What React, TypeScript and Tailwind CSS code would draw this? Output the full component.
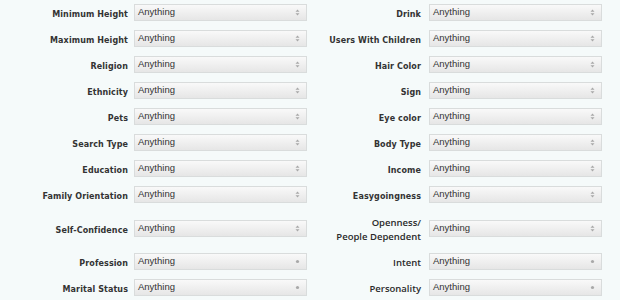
import React from "react";

type Field = {
  label: string;
  alt?: boolean; // label drawn in Open Sans instead of the Verdana-like face
  dot?: boolean; // single dot arrow instead of up/down carets
};

const rows: [Field, Field][] = [
  [{ label: "Minimum Height" }, { label: "Drink" }],
  [{ label: "Maximum Height" }, { label: "Users With Children" }],
  [{ label: "Religion" }, { label: "Hair Color" }],
  [{ label: "Ethnicity" }, { label: "Sign" }],
  [{ label: "Pets" }, { label: "Eye color" }],
  [{ label: "Search Type" }, { label: "Body Type" }],
  [{ label: "Education" }, { label: "Income" }],
  [{ label: "Family Orientation" }, { label: "Easygoingness" }],
  [{ label: "Self-Confidence" }, { label: "Openness/\nPeople Dependent", alt: true }],
  [{ label: "Profession", dot: true }, { label: "Intent", alt: true, dot: true }],
  [{ label: "Marital Status", dot: true }, { label: "Personality", alt: true, dot: true }],
];

const Arrow = ({ dot }: { dot?: boolean }) =>
  dot ? (
    <svg width="5" height="5" viewBox="0 0 5 5" className="shrink-0">
      <circle cx="2.5" cy="2.5" r="1.6" fill="#a8a8a8" />
    </svg>
  ) : (
    <svg width="5" height="7" viewBox="0 0 5 7" className="shrink-0">
      <path d="M2.5 0.5 L4.5 2.8 H0.5 Z" fill="#a8a8a8" />
      <path d="M2.5 6.5 L4.5 4.2 H0.5 Z" fill="#a8a8a8" />
    </svg>
  );

const FakeSelect = ({ dot }: { dot?: boolean }) => (
  <div className="flex h-[17px] w-[173px] items-center justify-between border border-[#d9dcdc] bg-gradient-to-b from-[#f9f9f9] to-[#e6e6e6] pl-[3px] pr-[6px]">
    <span className="-mt-[1px] font-['Liberation_Sans',Arial,sans-serif] text-[9.5px] leading-none text-[#333]">
      Anything
    </span>
    <Arrow dot={dot} />
  </div>
);

const Label = ({ field, pad }: { field: Field; pad: string }) => {
  if (field.alt) {
    const lines = field.label.split("\n");
    return (
      <div className={`flex flex-col items-end justify-center text-right ${pad}`}>
        {lines.map((l) => (
          <span
            key={l}
            className={`font-['Open_Sans',sans-serif] text-[9.5px] font-semibold text-[#2a2a2a] ${
              lines.length > 1 ? "leading-[14px]" : "leading-none"
            }`}
          >
            {l}
          </span>
        ))}
      </div>
    );
  }
  return (
    <div
      className={`flex items-center justify-end whitespace-nowrap pt-[5px] text-right font-['DejaVu_Sans',Verdana,sans-serif] text-[8px] font-bold leading-none tracking-[0.1px] text-[#333] ${pad}`}
    >
      {field.label}
    </div>
  );
};

export default function App() {
  return (
    <div className="h-[300px] w-[620px] overflow-hidden bg-[#f5fafa] pt-[4px]">
      <div className="grid grid-cols-[134px_173px_122px_173px] gap-y-[9px]">
        {rows.map(([left, right], i) => (
          <React.Fragment key={i}>
            <Label field={left} pad="pr-[6px]" />
            <div className="flex items-center">
              <FakeSelect dot={left.dot} />
            </div>
            <Label
              field={right}
              pad={right.label.includes("\n") ? "pr-[8px] pt-[4px]" : right.alt ? "pr-[8px] pt-[3px]" : "pr-[8px]"}
            />
            <div className="flex items-center">
              <FakeSelect dot={right.dot} />
            </div>
          </React.Fragment>
        ))}
      </div>
    </div>
  );
}
